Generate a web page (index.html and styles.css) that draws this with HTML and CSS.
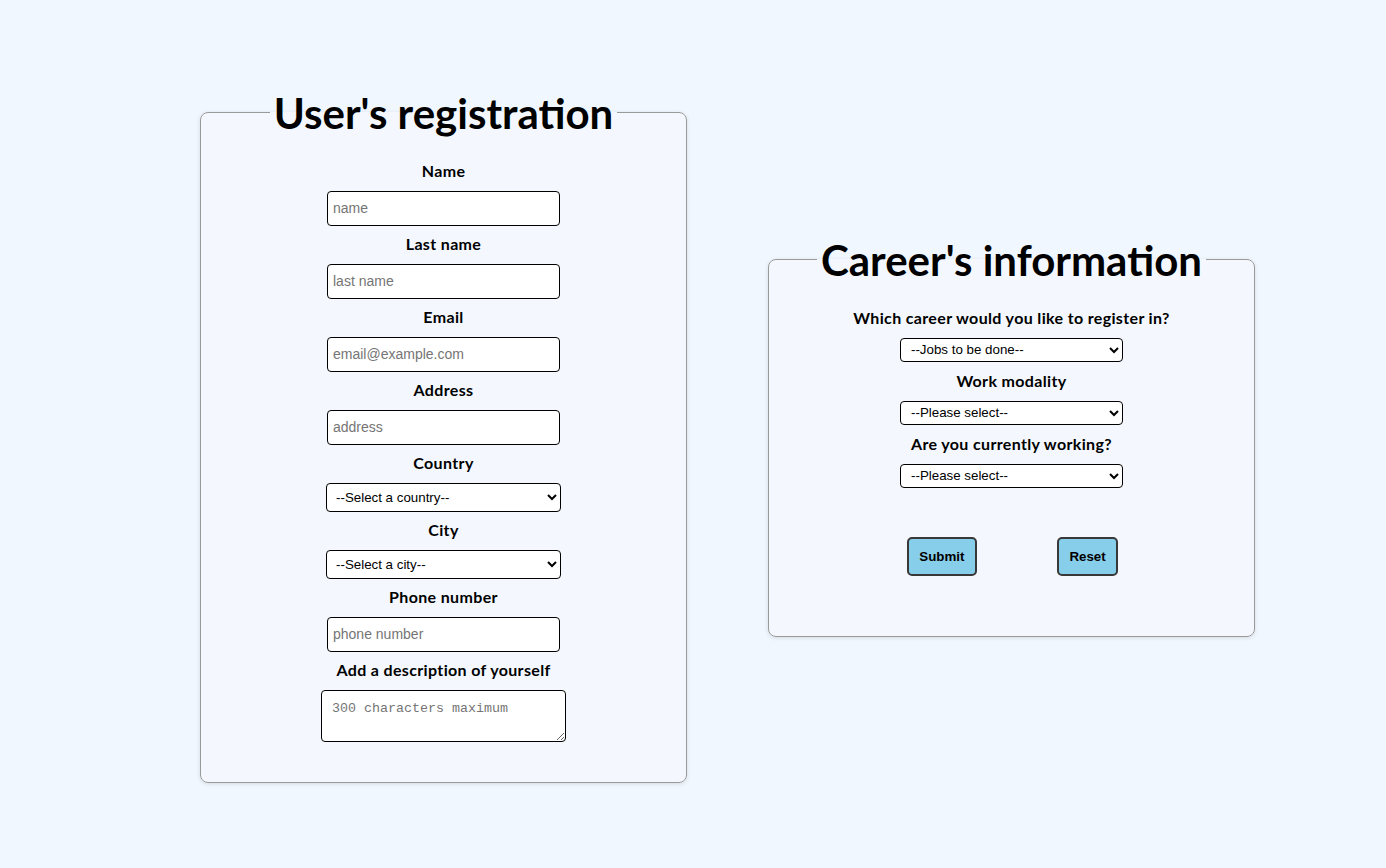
FILE: index.html
```html
<!DOCTYPE html>
<html lang="en">
<head>
<meta charset="utf-8">
<title>Registration</title>
<link rel="stylesheet" href="styles.css">
</head>
<body>
<main class="page">
  <fieldset class="card card-user">
    <legend class="card-title">User's registration</legend>
    <div class="fields fields-user">
      <div class="field">
        <label class="field-label" for="name">Name</label>
        <input class="text-input" id="name" type="text" placeholder="name">
      </div>
      <div class="field">
        <label class="field-label" for="lastname">Last name</label>
        <input class="text-input" id="lastname" type="text" placeholder="last name">
      </div>
      <div class="field">
        <label class="field-label" for="email">Email</label>
        <input class="text-input" id="email" type="email" placeholder="email@example.com">
      </div>
      <div class="field">
        <label class="field-label" for="address">Address</label>
        <input class="text-input" id="address" type="text" placeholder="address">
      </div>
      <div class="field">
        <label class="field-label" for="country">Country</label>
        <select class="select select-wide" id="country">
          <option>--Select a country--</option>
        </select>
      </div>
      <div class="field">
        <label class="field-label" for="city">City</label>
        <select class="select select-wide" id="city">
          <option>--Select a city--</option>
        </select>
      </div>
      <div class="field">
        <label class="field-label" for="phone">Phone number</label>
        <input class="text-input" id="phone" type="tel" placeholder="phone number">
      </div>
      <div class="field">
        <label class="field-label" for="desc">Add a description of yourself</label>
        <textarea class="text-area" id="desc" placeholder="300 characters maximum"></textarea>
      </div>
    </div>
  </fieldset>

  <fieldset class="card card-career">
    <legend class="card-title">Career's information</legend>
    <div class="fields fields-career">
      <div class="field">
        <label class="field-label" for="career">Which career would you like to register in?</label>
        <select class="select select-narrow" id="career">
          <option>--Jobs to be done--</option>
        </select>
      </div>
      <div class="field">
        <label class="field-label" for="modality">Work modality</label>
        <select class="select select-narrow" id="modality">
          <option>--Please select--</option>
        </select>
      </div>
      <div class="field">
        <label class="field-label" for="working">Are you currently working?</label>
        <select class="select select-narrow" id="working">
          <option>--Please select--</option>
        </select>
      </div>
    </div>
    <div class="actions">
      <button class="btn" type="submit">Submit</button>
      <button class="btn" type="reset">Reset</button>
    </div>
  </fieldset>
</main>
</body>
</html>
```

FILE: styles.css
```css
* {
  box-sizing: border-box;
}

body {
  margin: 0;
  background: #f0f7ff;
  font-family: "Lato", "Noto Sans", sans-serif;
  color: #000;
}

.page {
  display: flex;
  align-items: center;
  gap: 81px;
  min-height: 868px;
  padding: 2px 0 0 200px;
}

.card {
  width: 487px;
  margin: 0;
  border: 1px solid #9a9a9a;
  border-radius: 8px;
  background: #f4f8fe;
  box-shadow: 0 1px 4px rgba(0, 0, 0, 0.12);
  min-inline-size: 0;
}

.card-user {
  padding: 22px 0 40px;
}

.card-career {
  margin-top: 1px;
  padding: 22px 0 60px;
}

.card-title {
  margin: 0 auto;
  padding: 0 4px;
  font-size: 42px;
  line-height: 50px;
  font-weight: 700;
}

.fields {
  display: flex;
  flex-direction: column;
  align-items: center;
}

.fields-user {
  gap: 7px;
}

.fields-career {
  gap: 8px;
}

.field {
  display: flex;
  flex-direction: column;
  align-items: center;
  gap: 9px;
}

.field-label {
  font-size: 16px;
  line-height: 22px;
  font-weight: 700;
  letter-spacing: 0.35px;
}

.text-input {
  width: 233px;
  height: 35px;
  margin: 0;
  padding: 0 5px;
  border: 1px solid #000;
  border-radius: 4px;
  background: #fff;
  font-family: "Liberation Sans", Arial, sans-serif;
  font-size: 14px;
}

.text-input::placeholder {
  color: #757575;
}

.select {
  margin: 0;
  border: 1px solid #000;
  border-radius: 4px;
  background: #fff;
  font-family: "Liberation Sans", Arial, sans-serif;
  font-size: 13.33px;
  color: #000;
}

.select-wide {
  width: 235px;
  height: 29px;
  padding: 0 4px 0 5px;
}

.select-narrow {
  width: 223px;
  height: 24px;
  padding: 0 4px 0 6px;
}

.text-area {
  width: 245px;
  height: 52px;
  margin: 0;
  padding: 10px;
  border: 1px solid #000;
  border-radius: 4px;
  background: #fff;
  font-family: "Liberation Mono", monospace;
  font-size: 13.33px;
}

.text-area::placeholder {
  color: #757575;
}

.actions {
  display: flex;
  justify-content: center;
  gap: 80px;
  margin-top: 49px;
  padding-left: 2px;
}

.btn {
  margin: 0;
  padding: 10px 10.5px;
  border: 2px solid #383838;
  border-radius: 5px;
  background: #87ceeb;
  color: #000;
  font-family: "Liberation Sans", Arial, sans-serif;
  font-size: 13.33px;
  font-weight: 700;
  line-height: normal;
}
```
